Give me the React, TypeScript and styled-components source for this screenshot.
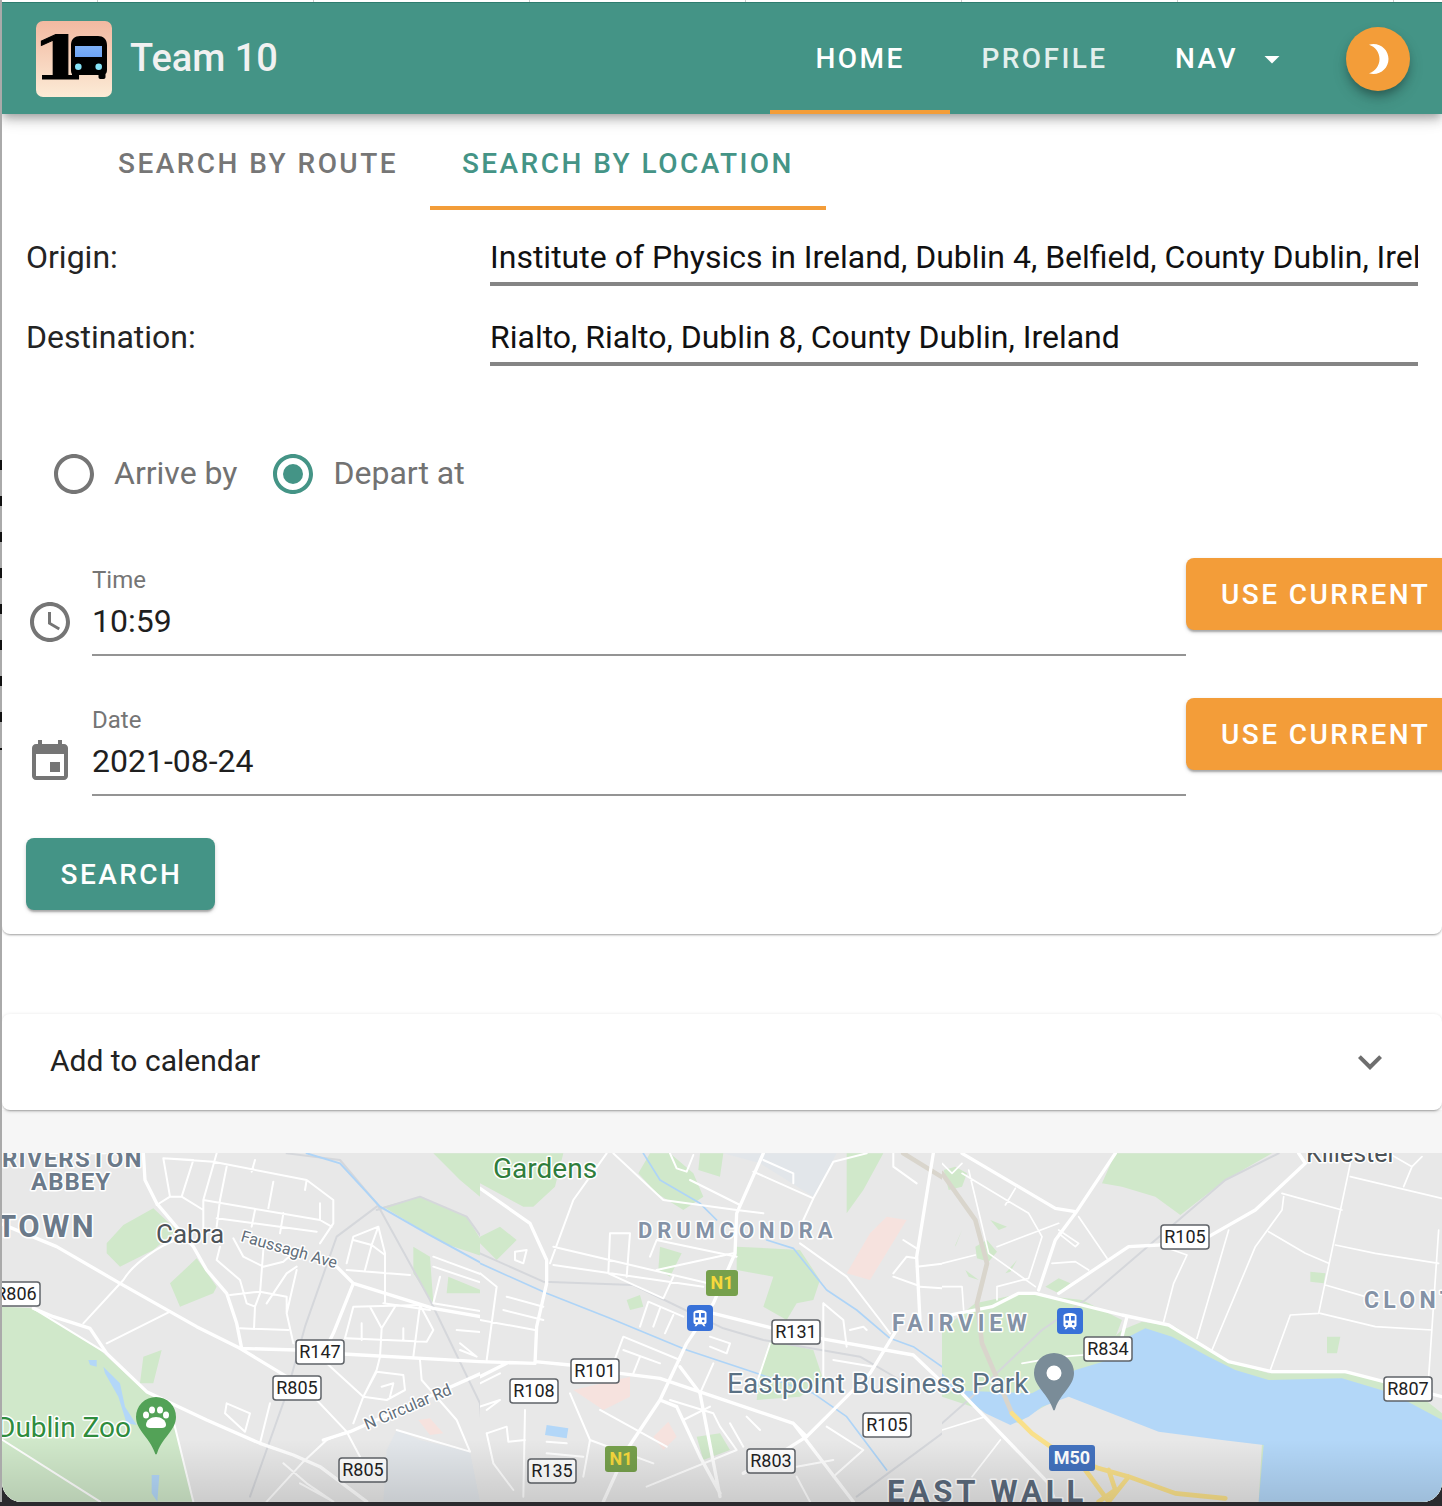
import React from "react";
import styled, { createGlobalStyle } from "styled-components";

const Global = createGlobalStyle`
  html, body { margin: 0; padding: 0; background: #fff; overflow: hidden; }
  * { box-sizing: border-box; }
  body { font-family: Roboto, "Liberation Sans", sans-serif; }
`;

const TEAL = "#449486";
const ORANGE = "#f39d39";
const SPACED = "2.45px";

const Frame = styled.div`
  width: 1442px;
  height: 1506px;
  overflow: hidden;
  padding: 2px 0 4px 2px;
  background-color: #2b2a2e;
  background-image:
    repeating-linear-gradient(180deg, #111 0 10px, #aaa 10px 36px),
    linear-gradient(#aaa, #aaa),
    linear-gradient(90deg, #ccc 0 1px, #fff 1px 216px);
  background-size: 2px 290px, 2px 1502px, 216px 2px;
  background-position: 0 460px, 0 0, 97px 0;
  background-repeat: no-repeat, no-repeat, repeat-x;
`;

const Page = styled.div`
  display: flex;
  flex-direction: column;
  height: 1500px;
  background: #fff;
  border-radius: 0 0 20px 20px;
  overflow: hidden;
`;

const Header = styled.header`
  position: relative;
  z-index: 3;
  flex: none;
  display: flex;
  align-items: center;
  height: 112px;
  padding: 0 32px 0 34px;
  background: ${TEAL};
  border-top: 1px solid #2e7d6f;
  box-shadow: 0 4px 8px -2px rgba(0, 0, 0, 0.25), 0 8px 10px rgba(0, 0, 0, 0.12), 0 2px 20px rgba(0, 0, 0, 0.1);
`;

const Logo = styled.svg`
  flex: none;
  width: 76px;
  height: 76px;
`;

const Title = styled.div`
  margin: -2px 0 0 18px;
  font-size: 38px;
  font-weight: 500;
  color: #f1f1f1;
`;

const Nav = styled.nav`
  display: flex;
  align-items: stretch;
  align-self: stretch;
  margin-left: auto;
`;

const NavItem = styled.div<{ $width: number; $active?: boolean }>`
  display: flex;
  align-items: center;
  justify-content: center;
  width: ${(p) => p.$width}px;
  padding-top: 4px;
  font-size: 28px;
  font-weight: 500;
  letter-spacing: ${SPACED};
  color: #fff;
  opacity: ${(p) => (p.$active ? 1 : 0.85)};
  border-bottom: 4px solid ${(p) => (p.$active ? ORANGE : "transparent")};
`;

const NavMenu = styled.div`
  display: flex;
  align-items: center;
  margin-left: 36px;
  font-size: 28px;
  font-weight: 500;
  letter-spacing: ${SPACED};
  color: #fff;
  svg { margin-left: 16px; }
`;

const MoonButton = styled.button`
  display: flex;
  align-items: center;
  justify-content: center;
  flex: none;
  width: 64px;
  height: 64px;
  margin-left: 56px;
  padding: 0;
  border: 0;
  border-radius: 50%;
  background: ${ORANGE};
  box-shadow: 0 6px 10px -2px rgba(0, 0, 0, 0.3), 0 8px 16px rgba(0, 0, 0, 0.12);
`;

const Icon = styled.svg<{ $size: number; $color: string }>`
  flex: none;
  display: block;
  width: ${(p) => p.$size}px;
  height: ${(p) => p.$size}px;
  fill: ${(p) => p.$color};
`;

const SearchCard = styled.section`
  position: relative;
  z-index: 2;
  flex: none;
  height: 820px;
  background: #fff;
  border-radius: 0 0 8px 8px;
  box-shadow: 0 2px 2px -1px rgba(0, 0, 0, 0.25), 0 1px 3px rgba(0, 0, 0, 0.16);
`;

const Tabs = styled.div`
  display: flex;
  height: 96px;
  padding-left: 84px;
`;

const Tab = styled.div<{ $active?: boolean }>`
  display: flex;
  align-items: center;
  padding: 8px 32px 2px;
  font-size: 28px;
  font-weight: 500;
  letter-spacing: ${SPACED};
  color: ${(p) => (p.$active ? TEAL : "#767676")};
  border-bottom: 4px solid ${(p) => (p.$active ? ORANGE : "transparent")};
`;

const Form = styled.div`
  display: flex;
  flex-direction: column;
  padding: 20px 0 0 24px;
`;

const AddressRow = styled.label`
  display: flex;
  align-items: flex-start;
  height: 56px;
  margin-bottom: 24px;
`;

const AddressLabel = styled.span`
  flex: none;
  width: 464px;
  padding-top: 7px;
  font-size: 32px;
  line-height: 40px;
  color: #242424;
`;

const AddressInput = styled.input`
  width: 928px;
  height: 56px;
  padding: 2px 0 0;
  border: 0;
  border-bottom: 4px solid #858585;
  outline: 0;
  background: none;
  font-family: inherit;
  font-size: 32px;
  color: #111;
`;

const RadioRow = styled.div`
  display: flex;
  align-items: center;
  height: 48px;
  margin: 60px 0 60px 24px;
`;

const RadioOption = styled.label`
  display: flex;
  align-items: center;
  margin-right: 32px;
  font-size: 32px;
  color: #727272;
  svg { margin-right: 16px; }
`;

const RadioText = styled.span`
  margin-top: -2px;
`;

const FieldRow = styled.div`
  display: flex;
  align-items: flex-start;
  height: 98px;
  margin-bottom: 42px;
`;

const FieldIcon = styled.div`
  flex: none;
  width: 66px;
  padding-top: 40px;
`;

const Field = styled.div`
  flex: none;
  width: 1094px;
  height: 98px;
  display: flex;
  flex-direction: column;
  border-bottom: 2px solid #949494;
`;

const FieldLabel = styled.div`
  margin-top: 8px;
  font-size: 24px;
  line-height: 28px;
  color: #757575;
`;

const FieldValue = styled.div`
  margin-top: 7px;
  font-size: 32px;
  line-height: 40px;
  color: #1f1f1f;
`;

const ActionButton = styled.button<{ $bg: string }>`
  flex: none;
  display: block;
  height: 72px;
  padding: 1px 35px 0;
  border: 0;
  border-radius: 8px;
  background: ${(p) => p.$bg};
  color: #fff;
  font-family: inherit;
  font-size: 28px;
  font-weight: 500;
  letter-spacing: ${SPACED};
  white-space: nowrap;
  box-shadow: 0 3px 2px -1px rgba(0, 0, 0, 0.25), 0 2px 4px rgba(0, 0, 0, 0.16);
`;

const UseCurrent = styled(ActionButton)`
  width: 280px;
  text-align: left;
`;

const SearchButton = styled(ActionButton)`
  width: 189px;
  padding: 1px 0 0 2px;
  text-align: center;
`;

const Gap = styled.div`
  flex: none;
  height: 80px;
`;

const Accordion = styled.div`
  position: relative;
  z-index: 2;
  flex: none;
  display: flex;
  align-items: center;
  justify-content: space-between;
  height: 96px;
  padding: 0 48px;
  background: #fff;
  border-radius: 8px;
  font-size: 30px;
  color: #222;
  box-shadow: 0 2px 2px -1px rgba(0, 0, 0, 0.28), 0 1px 4px rgba(0, 0, 0, 0.14);
`;

const AccordionText = styled.span`
  margin-top: -4px;
`;

const MapSection = styled.div`
  flex: 1;
  display: flex;
  flex-direction: column;
  padding-top: 43px;
  background: #f6f6f6;
`;

const MapSvg = styled.svg`
  display: block;
  width: 1440px;
  height: 349px;
  text {
    font-family: Roboto, "Liberation Sans", sans-serif;
    paint-order: stroke;
    stroke: #fff;
    stroke-width: 3px;
    stroke-linejoin: round;
  }
`;

const P = {
  time: "M11.99 2C6.47 2 2 6.48 2 12s4.47 10 9.99 10C17.52 22 22 17.52 22 12S17.52 2 11.99 2zM12 20c-4.42 0-8-3.58-8-8s3.58-8 8-8 8 3.58 8 8-3.58 8-8 8zM12.5 7H11v6l5.25 3.15.75-1.23-4.5-2.67z",
  event: "M17 12h-5v5h5v-5zM16 1v2H8V1H6v2H5c-1.11 0-1.99.9-1.99 2L3 19c0 1.1.89 2 2 2h14c1.1 0 2-.9 2-2V5c0-1.1-.9-2-2-2h-1V1h-2zm3 18H5V8h14v11z",
  expand: "M16.59 8.59L12 13.17 7.41 8.59 6 10l6 6 6-6z",
  drop: "M7 10l5 5 5-5z",
  moon: "M9 2c-1.05 0-2.05.16-3 .46 4.06 1.27 7 5.06 7 9.54 0 4.48-2.94 8.27-7 9.54.95.3 1.95.46 3 .46 5.52 0 10-4.48 10-10S14.52 2 9 2z",
  ring: "M12 2C6.48 2 2 6.48 2 12s4.48 10 10 10 10-4.48 10-10S17.52 2 12 2zm0 18c-4.42 0-8-3.58-8-8s3.58-8 8-8 8 3.58 8 8-3.58 8-8 8z",
};

const MIcon = ({ d, size = 48, color, dot }: { d: string; size?: number; color: string; dot?: boolean }) => (
  <Icon viewBox="0 0 24 24" $size={size} $color={color}>
    <path d={d} />
    {dot && <circle cx="12" cy="12" r="5" />}
  </Icon>
);

const TeamLogo = () => (
  <Logo viewBox="0 0 76 76">
    <defs>
      <linearGradient id="logoBg" x1="0" y1="0" x2="0" y2="1">
        <stop offset="0" stopColor="#f2b9a1" />
        <stop offset="1" stopColor="#fcebd6" />
      </linearGradient>
      <linearGradient id="logoGlass" x1="0" y1="0" x2="0" y2="1">
        <stop offset="0" stopColor="#7fb2f8" />
        <stop offset="1" stopColor="#6ea4f5" />
      </linearGradient>
    </defs>
    <rect width="76" height="76" rx="7" fill="url(#logoBg)" />
    <text transform="translate(-4 58) scale(1.32 1)" fontFamily="'DejaVu Serif', serif" fontWeight="700" fontSize="59" fill="#000" stroke="#000" strokeWidth="1">1</text>
    <path d="M35 24c0-6 4-9 9-9h18c5 0 9 3 9 9v24c0 3-.4 4-1.500 5v3c0 1.300-.7 2-2 2h-3c-1.300 0-2-.7-2-2v-2H43v2c0 1.300-.7 2-2 2h-3c-1.300 0-2-.7-2-2v-3c-.8-1-1-2-1-5z" fill="#000" />
    <rect x="39" y="25" width="27" height="11" fill="url(#logoGlass)" />
    <circle cx="42.300" cy="45.700" r="3.300" fill="#86e3f7" />
    <circle cx="62.700" cy="45.700" r="3.300" fill="#86e3f7" />
  </Logo>
);

const Roads = ({ d, w, c = "#fff" }: { d: string[]; w: number; c?: string }) => (
  <path d={d.join(" ")} fill="none" stroke={c} strokeWidth={w} strokeLinejoin="round" strokeLinecap="round" />
);

const PARK = "#d0e8ca";
const WATER = "#b3d7f8";
const RAIL = "#d5d7db";
const PINK = "#f6e2de";

const ZoneA = () => (
  <g transform="translate(0 1130) scale(.33333)">
    <path fill={PARK} d="M320 340L370 285L460 235L530 300L460 360L360 410L320 370ZM510 460L590 385L650 470L640 490L540 530ZM5 530L100 535L300 660L440 790L510 830L580 1115L40 1115L5 1090ZM430 680L485 660L460 760L420 760ZM1150 230L1260 200L1400 260L1480 390L1330 340ZM1240 350L1290 380L1300 520L1240 430ZM1300 70L1500 70L1500 250L1380 150ZM1345 440L1465 490L1340 490Z" />
    <path fill="#e2e6ea" d="M1190 900L1260 930L1410 965L1440 1115L1150 1115L1160 960Z" />
    <path fill={PINK} d="M1255 870L1290 865L1330 910L1290 915Z" />
    <path fill={WATER} d="M265 690L290 690L290 710L270 705ZM310 710L360 760L375 830L410 885L380 880L355 800L315 730ZM455 1035L478 1035L472 1115L455 1090Z" />
    <Roads w={6} c={RAIL} d={["M860 70L1020 90L1130 220L1290 510L1440 820L1460 1115", "M1130 240L1260 200L1400 260L1500 400", "M1130 230L1010 320L915 590L860 790L750 1100"]} />
    <Roads w={6} c="#aed4f7" d={["M920 70L1020 100L1140 230L1280 310L1500 430"]} />
    <Roads w={6} d={[
      "M490 85L580 90L545 200L510 200Z", "M650 70L610 210L610 320", "M680 110L660 210L650 290", "M765 90L755 125", "M820 155L805 235", "M920 150L915 180",
      "M610 210L960 270L995 290", "M650 265L950 305", "M765 240L755 290", "M850 250L840 310", "M960 220L960 270", "M510 200L470 225", "M545 200L610 240",
      "M370 450C400 400 480 345 530 330", "M250 580L370 450", "M320 640L510 545", "M700 325L730 380L790 410L850 395L890 360", "M790 360L780 490L765 530L740 520L720 450L650 390L660 350",
      "M690 495L780 485L860 500", "M860 500L860 550L880 640", "M765 530L762 595", "M720 595L865 600", "M800 520L860 430L890 410", "M860 550L890 420",
      "M490 85L640 95L920 150L1000 210L1000 280L960 340", "M1040 400L1060 320L1135 290L1155 370L1155 520", "M1060 330L1115 345L1155 375", "M1135 290L1115 345L1095 420", "M1040 420L1230 435",
      "M1060 530L1260 525L1300 600L1280 635L1040 625", "M1110 530L1145 595L1185 530", "M1085 580L1085 630", "M1035 625L1060 530", "M1145 595L1140 680L1130 720L1090 800", "M1210 595L1210 630", "M1260 525L1240 680",
      "M1260 690L1265 750L1370 870L1410 965", "M1090 800L1130 725L1210 735L1215 780L1160 810L1090 800", "M1145 770L1180 760L1170 800", "M980 700L1090 800L1060 880", "M950 810L1040 905L1080 980", "M810 820L780 940",
      "M1040 905L980 930L910 995L800 1115", "M1190 900L1410 965", "M680 820L750 850L735 905L675 850Z", "M0 925L300 1115", "M510 830L580 1115", "M100 535L320 670", "M850 1000L920 1060L1000 1115M900 1060L1000 1115",
      "M1300 380L1490 450M1300 410L1480 470M1320 440L1300 520L1480 550M1370 600L1480 610M1380 640L1430 680L1380 660", "M1150 520L1290 540",
    ]} />
    <Roads w={10} d={[
      "M0 280L170 350L360 460L590 590L720 655L860 740", "M720 655L890 660", "M1030 672L1500 698", "M100 535L160 560L270 595L320 670L440 785L620 870L780 940L880 975L960 1010L1100 1115",
      "M430 70L435 150L470 220L580 350L620 420L680 490L710 580L725 655", "M1010 410L1060 460L1300 535L1500 570", "M1060 460L1000 610L985 640", "M970 930L1050 905L1500 705",
    ]} />
  </g>
);

const ZoneB = () => (
  <g transform="translate(480 1130) scale(.33333)">
    <path fill={PARK} d="M0 70L250 70L225 170L160 230L130 230L0 160ZM0 320L60 290L110 330L50 390L0 340ZM475 130L510 70L570 70L640 130L670 200L610 240L530 190ZM660 70L730 70L720 140L655 120ZM770 350L960 360L1020 450L1000 510L950 520L920 570L850 530L880 440L770 420ZM840 720L870 630L1000 660L1030 750L960 800L830 810ZM540 350L605 370L570 440L535 420ZM440 510L480 495L490 530L450 540ZM650 920L720 910L750 960L670 990ZM1100 250L1150 180L1210 70L1100 70Z" />
    <path fill="#e2e6ea" d="M730 70L1070 70L1000 200L840 100Z" />
    <path fill={PINK} d="M1100 430L1170 310L1220 260L1280 270L1170 450ZM280 780L450 740L450 800L370 840ZM520 920L565 875L590 920L550 960Z" />
    <path fill={WATER} d="M200 885L265 895L260 925L195 915Z" />
    <Roads w={6} c={RAIL} d={["M0 370L190 455L460 465L730 595L850 630L1140 680L1260 750", "M1130 1100L1400 900L1500 840"]} />
    <Roads w={5} c="#aed4f7" d={["M490 70L540 150L660 220L710 270", "M860 330L940 355L1040 480L1130 540L1230 625L1300 650L1400 720L1500 830", "M0 400L200 490L390 565L620 660L830 730L1000 790L1100 860L1220 1020"]} />
    <Roads w={14} c="#d9d5cc" d={["M1270 70L1400 150L1470 240L1500 340"]} />
    <Roads w={6} d={[
      "M380 70L280 210L210 400", "M400 70L550 210L770 240L850 250", "M630 150L780 225", "M570 70L590 115L620 125L640 75", "M850 90L940 130L940 160", "M820 125L1000 205L1060 95L1160 70", "M970 270L1000 205",
      "M390 310L450 310L440 440", "M390 310L385 430L550 505L580 440", "M220 350L770 480", "M220 405L670 470", "M510 380L530 330L770 380", "M530 420L760 370", "M480 590L505 515L610 560", "M520 590L540 535", "M555 610L580 555",
      "M690 620L750 640L740 670L690 650", "M870 640L830 760", "M700 700L660 790", "M1030 520L1090 570L1100 650", "M1030 520L1030 750", "M1110 600L1150 590L1160 600", "M1060 690L1180 710",
      "M430 620L600 690", "M430 620L400 700", "M430 660L540 700", "M480 680L460 730", "M0 570L165 600", "M80 500L190 530", "M0 430L50 470L20 690", "M70 540L190 570", "M270 790L330 930L310 1040", "M360 840L560 950", "M330 930L520 1000",
      "M20 910L80 890L85 935L135 930", "M135 840L130 1100", "M200 935L260 940", "M200 970L310 980", "M20 910L40 1000L100 1080", "M570 810L700 850L720 890", "M610 870L690 830", "M720 890L770 960L500 1070", "M750 880L790 950", "M800 860L840 900", "M950 1010L1060 990", "M950 1040L990 1115",
      "M1040 890L1150 960L1060 1040", "M1100 440L1200 570L1230 610", "M1100 440L960 340", "M1240 440L1310 465", "M1240 430L1280 380L1310 385", "M1270 330L1310 355", "M1310 410L1400 400L1500 370", "M1390 120L1390 590", "M1320 470L1450 480",
      "M1240 70L1240 110L1310 160M1400 70L1430 110L1500 70", "M105 365L140 360L130 400L105 390Z", "M0 760L60 730M0 830L60 810L20 840",
    ]} />
    <Roads w={10} d={[
      "M850 70L770 250L765 370L700 520L620 640L540 810L440 960L370 1115", "M700 550L880 595", "M1020 625L1300 675L1400 770L1500 840", "M0 175L150 280L200 390L200 460L170 590L165 700L0 695", "M165 695L270 705", "M420 730L540 745L940 880L1070 1050L1120 1115",
      "M1360 70L1310 380L1320 570", "M940 880L980 920L1170 730L1250 600", "M980 920L900 970L790 1030", "M600 710L660 790L720 1100", "M540 810L590 830L660 980L720 1090", "M0 740L80 700",
    ]} />
  </g>
);

const ZoneC = () => (
  <g transform="translate(942 1130) scale(.33333)">
    <path fill={PARK} d="M480 160L520 70L990 70L850 150L715 255L640 200L540 170ZM0 600L100 520L240 490L420 510L540 570L490 700L380 740L300 820L230 880L150 850L0 800ZM310 470L350 445L385 460L350 490ZM5 120L40 110L75 130L60 170L20 180ZM100 350L135 330L165 365L140 395L105 385ZM145 270L195 290L170 300ZM40 345L60 300L40 350ZM190 430L225 390L205 425ZM70 420L110 450L80 440Z" />
    <path fill={PARK} d="M540 600L600 575L700 590L850 690L980 730L1220 730L1400 770L1500 850L1500 1115L950 1115L960 940L650 900L370 795L250 860Z" />
    <path fill={WATER} d="M560 620L610 595L690 620L800 680L880 720L980 750L1200 745L1350 790L1500 870L1500 1115L950 1115L965 945L840 930L650 905L380 800L300 830L260 860L205 885L130 850L80 810L0 730L0 780L270 790L400 720L500 690Z" />
    <path fill={PARK} d="M1105 425L1150 430L1145 460L1105 455ZM1155 620L1195 620L1185 670L1155 670Z" />
    <Roads w={6} c={RAIL} d={["M1010 70L850 150L430 510L300 600L90 800L0 880"]} />
    <Roads w={5} d={[
      "M1225 100L1130 550L1045 555L985 720", "M1225 140L1500 205", "M1020 190L1200 240", "M1385 170L1410 110L1440 80", "M1340 70L1410 110", "M1180 345L1300 370L1490 400", "M980 305L1090 370L1160 400", "M1025 200L1020 240L940 350L810 660",
      "M1150 465L1270 500", "M1135 550L1300 590L1470 600", "M1490 300L1460 740", "M860 300L765 625", "M735 375L695 460L665 575", "M650 345L735 375", "M410 260L495 385", "M350 300L410 340L400 350L350 310", "M330 400L400 395L440 420",
      "M280 470L140 370L80 120", "M0 400L100 375", "M165 350L350 280", "M165 470L260 445L300 320L260 250L60 130", "M220 175L190 225", "M0 100L30 130L60 100", "M0 470L60 470L65 540", "M165 470L165 510", "M360 680L425 675", "M240 700L360 680", "M175 930L90 1040", "M0 900L130 860",
    ]} />
    <Roads w={10} d={[
      "M280 490L540 555L680 585L860 695L990 725L1210 725L1500 800", "M520 70L400 250L340 330L290 480", "M350 490L560 350L650 345L800 320L940 240L1090 100L1070 70", "M0 560L150 530L230 490L280 490", "M60 70L340 235L400 245", "M60 790L320 1060L340 1115", "M555 560L540 620",
    ]} />
    <Roads w={14} c="#d9d5cc" d={["M0 130L100 270L135 400L105 520L120 640L210 850"]} />
    <Roads w={14} c="#f9e08a" d={["M210 850L270 910L340 960L470 1015L560 1040L700 1090L850 1105", "M430 1020L500 1115", "M500 1020L520 1080L470 1115", "M560 1040L500 1115"]} />
  </g>
);

type ShieldData = { x: number; y: number; t: string };

const SHIELDS: ShieldData[] = [
  { x: -8, y: 1282, t: "R806" },
  { x: 296, y: 1340, t: "R147" },
  { x: 273, y: 1376, t: "R805" },
  { x: 339, y: 1458, t: "R805" },
  { x: 528, y: 1459, t: "R135" },
  { x: 510, y: 1379, t: "R108" },
  { x: 571, y: 1359, t: "R101" },
  { x: 772, y: 1320, t: "R131" },
  { x: 863, y: 1413, t: "R105" },
  { x: 747, y: 1449, t: "R803" },
  { x: 1161, y: 1225, t: "R105" },
  { x: 1084, y: 1337, t: "R834" },
  { x: 1384, y: 1377, t: "R807" },
];

const Shield = ({ x, y, t }: ShieldData) => (
  <g>
    <rect x={x} y={y} width="48" height="24" rx="3" fill="#fff" stroke="#5f6368" strokeWidth="1.500" />
    <text x={x + 24} y={y + 18} textAnchor="middle" fontSize="18" fill="#222" style={{ strokeWidth: 0 }}>{t}</text>
  </g>
);

const BadgeSign = ({ x, y, w, t, bg, fg }: { x: number; y: number; w: number; t: string; bg: string; fg: string }) => (
  <g>
    <rect x={x} y={y} width={w} height="26" rx="3" fill={bg} />
    <text x={x + w / 2} y={y + 19} textAnchor="middle" fontSize="18" fontWeight="700" fill={fg} style={{ strokeWidth: 0 }}>{t}</text>
  </g>
);

const Train = ({ x, y }: { x: number; y: number }) => (
  <g transform={`translate(${x} ${y})`}>
    <rect width="26" height="26" rx="4" fill="#3871d8" />
    <path d="M6.500 8c0-2 3-3 6.500-3s6.500 1 6.500 3v9c0 1.300-1 2.300-2.300 2.300l1.300 2h-1.800l-1.700-2h-4l-1.700 2H7.500l1.300-2c-1.300 0-2.300-1-2.300-2.300z" fill="#fff" />
    <rect x="8.300" y="8" width="3.700" height="4.500" fill="#3871d8" />
    <rect x="14" y="8" width="3.700" height="4.500" fill="#3871d8" />
    <circle cx="9.800" cy="16" r="1.300" fill="#3871d8" />
    <circle cx="16.200" cy="16" r="1.300" fill="#3871d8" />
  </g>
);

const Pin = ({ x, y, c, tip }: { x: number; y: number; c: string; tip: number }) => (
  <path d={`M${x - 20} ${y}a20 20 0 0 1 40 0c0 13-13 20-18.500 ${tip - y - 3}q-1.500 5-3 0c-5.500-${tip - y - 3 - 20}-18.500-${tip - y - 16}-18.500-${tip - y - 3}z`} fill={c} />
);

const PlaceLabel = styled.text<{ $c: string; $s: number; $w?: number; $ls?: number }>`
  fill: ${(p) => p.$c};
  font-size: ${(p) => p.$s}px;
  font-weight: ${(p) => p.$w ?? 400};
  letter-spacing: ${(p) => p.$ls ?? 0}px;
`;

const CityMap = () => (
  <MapSvg viewBox="2 1153 1440 349">
    <defs>
      <linearGradient id="mapFade" x1="0" y1="0" x2="0" y2="1">
        <stop offset="0" stopColor="#000" stopOpacity="0" />
        <stop offset="1" stopColor="#000" stopOpacity=".12" />
      </linearGradient>
      <clipPath id="clipA"><rect x="0" y="1153" width="480" height="349" /></clipPath>
      <clipPath id="clipB"><rect x="480" y="1153" width="462" height="349" /></clipPath>
      <clipPath id="clipC"><rect x="942" y="1153" width="500" height="349" /></clipPath>
    </defs>
    <rect x="0" y="1153" width="1442" height="349" fill="#e8e8e8" />
    <g clipPath="url(#clipA)"><ZoneA /></g>
    <g clipPath="url(#clipB)"><ZoneB /></g>
    <g clipPath="url(#clipC)"><ZoneC /></g>

    <PlaceLabel x="2" y="1167" $c="#6b7a8a" $s={24} $w={700} $ls={1.2}>RIVERSTON</PlaceLabel>
    <PlaceLabel x="31" y="1190" $c="#6b7a8a" $s={24} $w={700} $ls={1}>ABBEY</PlaceLabel>
    <PlaceLabel x="-3" y="1237" $c="#6b7a8a" $s={31} $w={700} $ls={2.5}>TOWN</PlaceLabel>
    <PlaceLabel x="156" y="1243" $c="#4d5358" $s={26}>Cabra</PlaceLabel>
    <PlaceLabel x="240" y="1241" $c="#626e7a" $s={16} transform="rotate(16 240 1241)">Faussagh Ave</PlaceLabel>
    <PlaceLabel x="493" y="1178" $c="#2f7d3c" $s={28}>Gardens</PlaceLabel>
    <PlaceLabel x="638" y="1238" $c="#8492a6" $s={22} $w={700} $ls={4.9}>DRUMCONDRA</PlaceLabel>
    <PlaceLabel x="892" y="1331" $c="#8492a6" $s={23} $w={700} $ls={4.7}>FAIRVIEW</PlaceLabel>
    <PlaceLabel x="1364" y="1308" $c="#8492a6" $s={23} $w={700} $ls={4.3}>CLONTARF</PlaceLabel>
    <PlaceLabel x="727" y="1393" $c="#5a7184" $s={28}>Eastpoint Business Park</PlaceLabel>
    <PlaceLabel x="-3" y="1437" $c="#2f8c3d" $s={28}>Dublin Zoo</PlaceLabel>
    <PlaceLabel x="367" y="1430" $c="#626e7a" $s={16} transform="rotate(-23 367 1430)">N Circular Rd</PlaceLabel>
    <PlaceLabel x="887" y="1502" $c="#5c6b7d" $s={31} $w={700} $ls={4}>EAST WALL</PlaceLabel>
    <PlaceLabel x="1306" y="1162" $c="#4d5358" $s={25}>Killester</PlaceLabel>

    {SHIELDS.map((s) => (
      <Shield key={`${s.t}-${s.x}`} {...s} />
    ))}
    <BadgeSign x={706} y={1270} w={32} t="N1" bg="#76a04c" fg="#f6d83c" />
    <BadgeSign x={605} y={1446} w={32} t="N1" bg="#76a04c" fg="#f6d83c" />
    <BadgeSign x={1049} y={1445} w={46} t="M50" bg="#4372bf" fg="#fff" />
    <Train x={687} y={1305} />
    <Train x={1057} y={1308} />

    <Pin x={156} y={1417} c="#53a257" tip={1455} />
    <g fill="#fff">
      <ellipse cx="146" cy="1415" rx="3" ry="3.500" />
      <ellipse cx="152" cy="1410" rx="3" ry="3.500" />
      <ellipse cx="160" cy="1410" rx="3" ry="3.500" />
      <ellipse cx="166" cy="1415" rx="3" ry="3.500" />
      <path d="M146 1425c0-5 5-8 10-8s10 3 10 8c0 2-2 3-4 3h-12c-2 0-4-1-4-3z" />
    </g>
    <Pin x={1054} y={1373} c="#7a8c98" tip={1411} />
    <circle cx="1054" cy="1373" r="7.500" fill="#fff" />

    <rect x="0" y="1440" width="1442" height="62" fill="url(#mapFade)" />
  </MapSvg>
);

export default function App() {
  return (
    <Frame>
      <Global />
      <Page>
        <Header>
          <TeamLogo />
          <Title>Team 10</Title>
          <Nav>
            <NavItem $width={180} $active>HOME</NavItem>
            <NavItem $width={189}>PROFILE</NavItem>
            <NavMenu>
              NAV
              <MIcon d={P.drop} size={36} color="#fff" />
            </NavMenu>
          </Nav>
          <MoonButton aria-label="Toggle theme">
            <MIcon d={P.moon} size={36} color="#fff" />
          </MoonButton>
        </Header>

        <SearchCard>
          <Tabs>
            <Tab>SEARCH BY ROUTE</Tab>
            <Tab $active>SEARCH BY LOCATION</Tab>
          </Tabs>
          <Form>
            <AddressRow>
              <AddressLabel>Origin:</AddressLabel>
              <AddressInput readOnly value="Institute of Physics in Ireland, Dublin 4, Belfield, County Dublin, Ireland" />
            </AddressRow>
            <AddressRow>
              <AddressLabel>Destination:</AddressLabel>
              <AddressInput readOnly value="Rialto, Rialto, Dublin 8, County Dublin, Ireland" />
            </AddressRow>
            <RadioRow>
              <RadioOption>
                <MIcon d={P.ring} color="#757575" />
                <RadioText>Arrive by</RadioText>
              </RadioOption>
              <RadioOption>
                <MIcon d={P.ring} color={TEAL} dot />
                <RadioText>Depart at</RadioText>
              </RadioOption>
            </RadioRow>
            <FieldRow>
              <FieldIcon>
                <MIcon d={P.time} color="#757575" />
              </FieldIcon>
              <Field>
                <FieldLabel>Time</FieldLabel>
                <FieldValue>10:59</FieldValue>
              </Field>
              <UseCurrent $bg={ORANGE}>USE CURRENT</UseCurrent>
            </FieldRow>
            <FieldRow>
              <FieldIcon>
                <MIcon d={P.event} color="#757575" />
              </FieldIcon>
              <Field>
                <FieldLabel>Date</FieldLabel>
                <FieldValue>2021-08-24</FieldValue>
              </Field>
              <UseCurrent $bg={ORANGE}>USE CURRENT</UseCurrent>
            </FieldRow>
            <SearchButton $bg={TEAL}>SEARCH</SearchButton>
          </Form>
        </SearchCard>

        <Gap />

        <Accordion>
          <AccordionText>Add to calendar</AccordionText>
          <MIcon d={P.expand} color="#6e6e6e" />
        </Accordion>

        <MapSection>
          <CityMap />
        </MapSection>
      </Page>
    </Frame>
  );
}
